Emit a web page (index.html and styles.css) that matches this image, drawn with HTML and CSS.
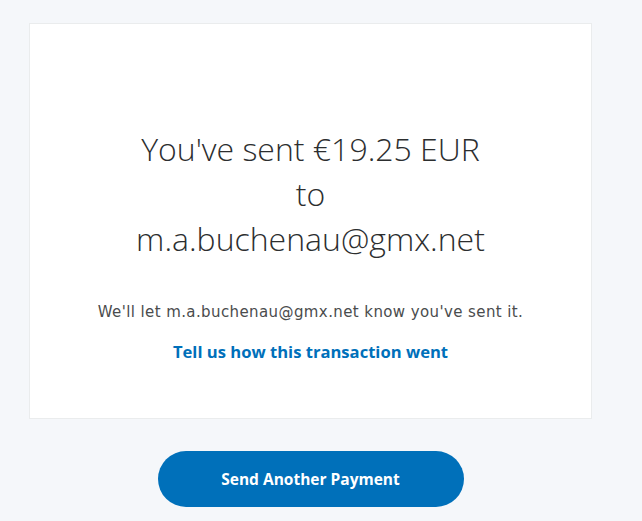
FILE: index.html
```html
<!DOCTYPE html>
<html>
<head>
<meta charset="utf-8">
<link rel="stylesheet" href="styles.css">
</head>
<body>
<main class="page">
  <section class="card">
    <h1 class="title">You've sent €19.25 EUR<br>to<br>m.a.buchenau@gmx.net</h1>
    <p class="note">We'll let m.a.buchenau@gmx.net know you've sent it.</p>
    <a class="link" href="#">Tell us how this transaction went</a>
  </section>
  <div class="actions">
    <button class="btn">Send Another Payment</button>
  </div>
</main>
</body>
</html>
```
FILE: styles.css
```css
html, body {
  margin: 0;
  padding: 0;
  background: #f5f7fa;
}
body {
  font-family: "Open Sans", "Noto Sans", sans-serif;
  color: #2c2e2f;
}
.page {
  width: 563px;
  margin-left: 29px;
  padding-top: 23px;
}
.card {
  background: #fff;
  border: 1px solid #eaeced;
  height: 396px;
  box-sizing: border-box;
  display: flex;
  flex-direction: column;
  align-items: center;
  padding-top: 102px;
}
.title {
  margin: 0;
  font-weight: 300;
  font-size: 32px;
  line-height: 45px;
  text-align: center;
  color: #2c2e2f;
}
.note {
  margin: 40px 0 0;
  font-family: "DejaVu Sans", sans-serif;
  font-size: 15px;
  letter-spacing: 0.4px;
  line-height: 22px;
  color: #4a4c4d;
}
.link {
  margin-top: 18px;
  font-size: 16.6px;
  font-weight: 700;
  color: #0070ba;
  text-decoration: none;
  line-height: 22px;
}
.actions {
  display: flex;
  justify-content: center;
  padding-top: 32px;
}
.btn {
  width: 306px;
  height: 56px;
  border: none;
  border-radius: 28px;
  background: #0070ba;
  color: #fff;
  font-family: "Open Sans", "Noto Sans", sans-serif;
  font-weight: 700;
  font-size: 15.5px;
}
```
